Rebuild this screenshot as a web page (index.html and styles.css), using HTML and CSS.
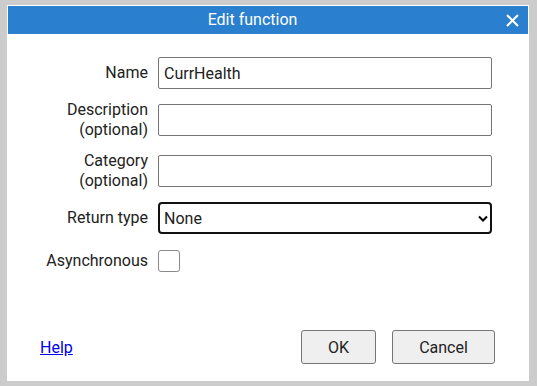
FILE: index.html
```html
<!DOCTYPE html>
<html lang="en">
<head>
    <meta charset="UTF-8">
    <title>Edit function</title>
    <link rel="stylesheet" href="styles.css">
</head>
<body>
    <div class="dialog">
        <div class="titlebar">
            <div class="title">Edit function</div>
            <button class="close" title="Close">
                <svg width="13" height="13" viewBox="0 0 13 13"><path d="M1 1L12 12M12 1L1 12" stroke="#fff" stroke-width="2" fill="none"/></svg>
            </button>
        </div>

        <div class="form">
            <label class="label">Name</label>
            <input class="field" type="text" value="CurrHealth">

            <label class="label">Description<br>(optional)</label>
            <input class="field" type="text">

            <label class="label">Category<br>(optional)</label>
            <input class="field" type="text">

            <label class="label">Return type</label>
            <select class="field select">
                <option>None</option>
            </select>

            <label class="label check-label">Asynchronous</label>
            <div class="check-cell"><input class="checkbox" type="checkbox"></div>
        </div>

        <div class="footer">
            <a class="help" href="#">Help</a>
            <div class="buttons">
                <button class="btn ok">OK</button>
                <button class="btn cancel">Cancel</button>
            </div>
        </div>
    </div>
</body>
</html>
```

FILE: styles.css
```css
body {
    margin: 0;
    padding: 5px 8px 5px 7px;
    background-color: #cccccc;
    font-family: Roboto, "Liberation Sans", sans-serif;
    font-size: 16px;
    color: #222;
}
.dialog {
    width: 520px;
    height: 374px;
    background: white;
    border: 1px solid white;
    display: flex;
    flex-direction: column;
}
.titlebar {
    display: flex;
    align-items: center;
    height: 28px;
    background: #2a80ce;
    color: white;
}
.title {
    flex: 1;
    text-align: center;
    font-size: 16px;
    line-height: 28px;
}
.close {
    width: 31px;
    height: 28px;
    padding: 0;
    border: none;
    background: none;
    display: flex;
    align-items: center;
    justify-content: center;
    cursor: pointer;
}
.form {
    display: grid;
    grid-template-columns: 140px 1fr;
    column-gap: 10px;
    row-gap: 11px;
    align-items: center;
    padding: 23px 36px 0 0;
}
.label {
    text-align: right;
    line-height: 20px;
}
.field {
    box-sizing: border-box;
    height: 32px;
    width: 100%;
    border: 1px solid #767676;
    border-radius: 2px;
    padding: 0 5px;
    font-family: inherit;
    font-size: 16px;
    color: #222;
    background: white;
}
.select {
    appearance: none;
    border: 2px solid #111;
    border-radius: 4px;
    padding: 0 4px;
    background-image: url("data:image/svg+xml;utf8,<svg xmlns='http://www.w3.org/2000/svg' width='10' height='7' viewBox='0 0 10 7'><path d='M1 1.5L5 5.5L9 1.5' stroke='black' stroke-width='2' fill='none'/></svg>");
    background-repeat: no-repeat;
    background-position: right 2px center;
}
.check-label {
    margin-top: 5px;
}
.check-cell {
    margin-top: 5px;
    display: flex;
}
.checkbox {
    appearance: none;
    margin: 0;
    width: 22px;
    height: 22px;
    border: 1px solid #8a8a8a;
    border-radius: 3px;
    background: white;
}
.footer {
    margin-top: auto;
    display: flex;
    align-items: center;
    justify-content: space-between;
    padding: 0 33px 16px 32px;
}
.help {
    color: #0000ee;
    text-decoration: underline;
}
.buttons {
    display: flex;
    gap: 16px;
}
.btn {
    height: 34px;
    font-family: inherit;
    font-size: 16px;
    color: #222;
    background: #efefef;
    border: 1px solid #767676;
    border-radius: 3px;
}
.ok {
    width: 75px;
}
.cancel {
    width: 103px;
}
```
